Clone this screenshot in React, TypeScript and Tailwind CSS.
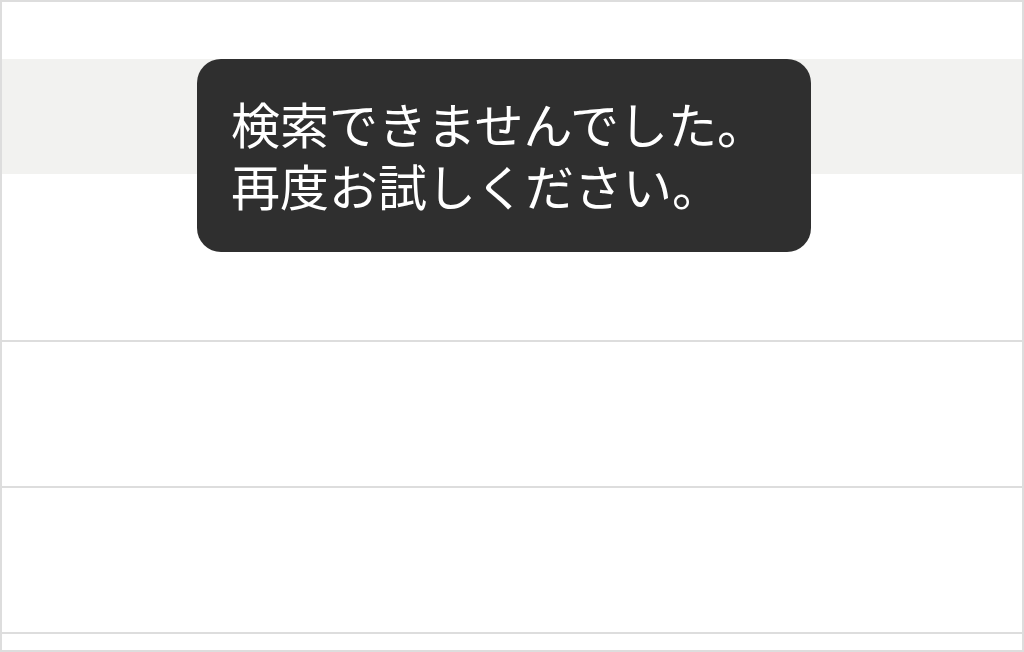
export default function App() {
  return (
    <div className="relative h-[652px] w-[1024px] overflow-hidden border-2 border-[#dddddd] bg-white font-['Noto_Sans_CJK_JP',sans-serif]">
      <div className="flex h-full flex-col">
        <div className="h-[57px] shrink-0" />
        <div className="h-[115px] shrink-0 bg-[#f2f2f0]" />
        <div className="h-[168px] shrink-0 border-b-2 border-[#dddddd]" />
        <div className="h-[146px] shrink-0 border-b-2 border-[#dddddd]" />
        <div className="h-[146px] shrink-0 border-b-2 border-[#dddddd]" />
        <div className="flex-1" />
      </div>

      {/* toast */}
      <div className="absolute left-[195px] top-[57px] w-[614px] rounded-[24px] bg-[#2f2f2f] px-[34px] pt-[33px] pb-[36px] text-[49px] leading-[62px] text-white">
        <p>検索できませんでした。</p>
        <p>再度お試しください。</p>
      </div>
    </div>
  );
}
